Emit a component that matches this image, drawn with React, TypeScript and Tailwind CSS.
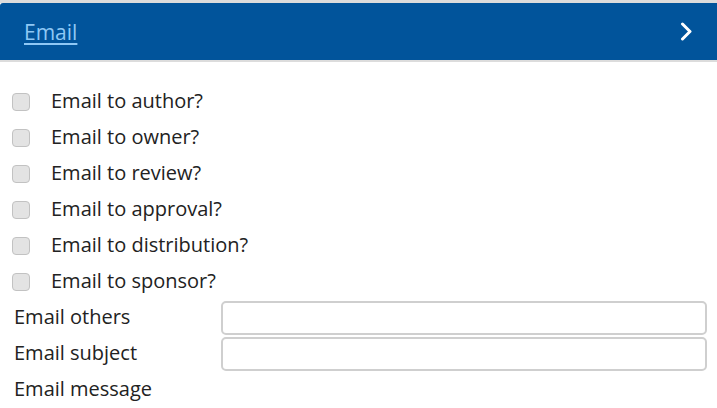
const checks = [
  "Email to author?",
  "Email to owner?",
  "Email to review?",
  "Email to approval?",
  "Email to distribution?",
  "Email to sponsor?",
];

export default function App() {
  return (
    <div className="h-[408px] w-[717px] overflow-hidden bg-white font-['Open_Sans',sans-serif] text-[#222]">
      <div className="border-t-[3px] border-b-2 border-[#dcdcdc]">
        <div className="flex h-[57px] items-center justify-between rounded-tl-[3px] bg-[#01549b] pl-6 pr-[24px]">
          <a href="#email" className="pt-[2px] text-[21px] text-[#8fc8f5] underline underline-offset-[3px]">
            Email
          </a>
          <svg width="13" height="19" viewBox="0 0 13 19" fill="none">
            <polyline
              points="2.5,2 10,9.5 2.5,17"
              stroke="white"
              strokeWidth="3"
              strokeLinecap="round"
              strokeLinejoin="round"
            />
          </svg>
        </div>
      </div>

      <div className="mt-[22px] flex flex-col">
        {checks.map((c) => (
          <label key={c} className="flex h-9 items-center">
            <span className="ml-[12px] h-[18px] w-[18px] rounded-[4px] border border-[#c2c2c2] bg-[#e3e3e3]" />
            <span className="ml-[21px] pb-[3px] text-[20px]">{c}</span>
          </label>
        ))}
      </div>

      <div className="flex flex-col pl-[14px] pr-[10px]">
        <div className="flex h-9 items-center">
          <span className="w-[207px] pb-[3px] text-[20px]">Email others</span>
          <input className="h-[34px] flex-1 rounded-[5px] border-2 border-[#cfcfcf] bg-white" />
        </div>
        <div className="flex h-9 items-center">
          <span className="w-[207px] pb-[3px] text-[20px]">Email subject</span>
          <input className="h-[34px] flex-1 rounded-[5px] border-2 border-[#cfcfcf] bg-white" />
        </div>
        <div className="flex h-9 items-center">
          <span className="pb-[3px] text-[20px]">Email message</span>
        </div>
      </div>
    </div>
  );
}
